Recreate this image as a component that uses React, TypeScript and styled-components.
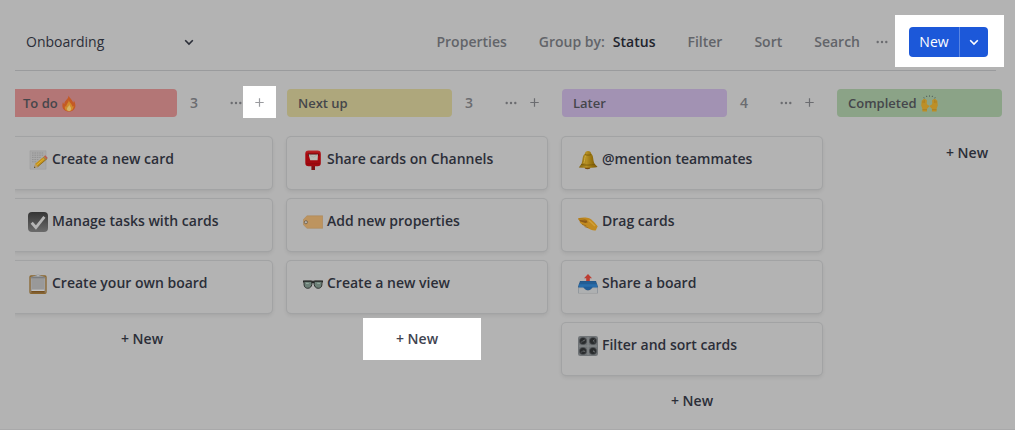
import React from 'react';
import styled, { createGlobalStyle } from 'styled-components';

const GlobalStyle = createGlobalStyle`
  * { box-sizing: border-box; }
  body {
    margin: 0;
    background: #b3b3b3;
    color: #2b2e38;
    font-family: 'Open Sans', 'Noto Sans', sans-serif;
    font-size: 14px;
    line-height: 20px;
  }
  button, input { font: inherit; color: inherit; }
  button { border: 0; padding: 0; background: none; cursor: pointer; white-space: nowrap; }
`;

const Page = styled.div`
  overflow: hidden;
  padding: 15px 0 12px 15px;
  border-bottom: 1px solid #a9a9aa;
`;

const Toolbar = styled.header`
  display: flex;
  align-items: center;
  min-height: 54px;
  padding-right: 11px;
`;

const ViewPicker = styled.div`
  display: flex;
  align-items: center;
  flex: 1;
  padding-left: 11px;
`;

const ViewName = styled.input`
  width: 156px;
  padding: 0;
  border: 0;
  outline: 0;
  background: none;
`;

const IconButton = styled.button<{ $width: number }>`
  display: flex;
  align-items: center;
  justify-content: center;
  flex: none;
  width: ${(p) => p.$width}px;
  height: 32px;
  color: #6b6c70;
`;

const PickerButton = styled(IconButton)`
  color: #2b2e38;
`;

const Actions = styled.nav`
  display: flex;
  align-items: center;
  gap: 32px;
  margin-right: 10px;
`;

const Action = styled.button`
  color: #626469;
  font-weight: 600;
`;

const GroupValue = styled.span`
  margin-left: 8px;
  color: #22242d;
`;

const PrimarySpotlight = styled.div`
  align-self: flex-start;
  margin-left: 1px;
  padding: 12px 16px 10px 14px;
  background: #fff;
`;

const SplitButton = styled.div`
  display: flex;
  height: 30px;
  overflow: hidden;
  border-radius: 4px;
  background: #1c58d9;
  color: #fff;
`;

const PrimaryButton = styled.button`
  width: 50px;
`;

const PrimaryMenuButton = styled.button`
  display: flex;
  align-items: center;
  justify-content: center;
  width: 29px;
  border-left: 1px solid #5a86e3;
`;

const Rule = styled.hr`
  height: 1px;
  margin: 1px 19px 15px 0;
  border: 0;
  background: #9a9b9d;
`;

const Board = styled.main`
  overflow: hidden;
`;

const Track = styled.div`
  display: flex;
  gap: 15px;
  margin-left: -3px;
`;

const Column = styled.section`
  flex: none;
  width: 260px;
`;

const ColumnHeader = styled.div`
  display: flex;
  align-items: center;
  height: 34px;
  margin-bottom: 17px;
`;

const Tag = styled.h2<{ $color: string }>`
  display: flex;
  align-items: center;
  gap: 4px;
  width: 165px;
  height: 28px;
  margin: 0 13px 0 0;
  padding: 0 11px;
  border-radius: 4px;
  background: ${(p) => p.$color};
  color: #45464b;
  font-size: 13px;
  font-weight: 600;
`;

const Count = styled.span`
  flex: 1;
  color: #6b6c70;
  font-weight: 600;
`;

const AddButton = styled(IconButton)<{ $lit: boolean }>`
  align-self: flex-start;
  margin-right: -4px;
  background: ${(p) => (p.$lit ? '#fff' : 'none')};
  color: ${(p) => (p.$lit ? '#999a9e' : '#6b6c70')};
`;

const Card = styled.article`
  display: flex;
  gap: 4px;
  height: 52px;
  margin-bottom: 10px;
  padding: 12px 16px;
  border-radius: 4px;
  box-shadow: 0 0 0 1px #a2a3a4, 0 2px 4px rgba(0, 0, 0, 0.1);
`;

const CardTitle = styled.h3`
  margin: 0;
  font-size: 14px;
  font-weight: 600;
`;

const NewRow = styled.div`
  display: flex;
  justify-content: center;
`;

const NewButton = styled.button<{ $lit: boolean }>`
  height: ${(p) => (p.$lit ? 42 : 32)}px;
  margin: ${(p) => (p.$lit ? '-5px 0' : '0')};
  margin-left: 10px;
  padding: 0 43px 0 33px;
  background: ${(p) => (p.$lit ? '#fff' : 'none')};
  color: ${(p) => (p.$lit ? '#3f4350' : '#2b2e38')};
  font-weight: 600;
`;

const Emoji = styled.svg`
  flex: none;
  margin-top: 1px;
`;

const TagEmoji = styled.svg`
  flex: none;
`;

const Chevron = () => (
  <svg width="12" height="12" viewBox="0 0 12 12" fill="none" stroke="currentColor" strokeWidth="1.6" aria-hidden>
    <path d="M2.2 4.2 6 8l3.8-3.8" />
  </svg>
);

const Dots = () => (
  <svg width="12" height="4" viewBox="0 0 12 4" fill="currentColor" aria-hidden>
    <circle cx="1.7" cy="2" r="1.2" />
    <circle cx="6" cy="2" r="1.2" />
    <circle cx="10.3" cy="2" r="1.2" />
  </svg>
);

const Plus = () => (
  <svg width="9" height="9" viewBox="0 0 9 9" stroke="currentColor" strokeWidth="1.2" aria-hidden>
    <path d="M4.5 .3v8.4M.3 4.5h8.4" />
  </svg>
);

const art: Record<string, React.ReactNode> = {
  memo: (
    <>
      <path d="M2 .8h16v18.4H2z" fill="#a9a9a9" stroke="#9a9a9a" strokeWidth=".5" />
      <path d="M4 3h12M4 5.2h12M4 7.4h9M4 9.6h7M4 11.8h5" stroke="#8f8f8f" strokeWidth=".9" strokeDasharray="1.6 .8" />
      <path d="m6 18 1.2-4.2L16.8 5.7l2.5 2.7-9.5 8.3z" fill="#c3921c" />
      <path d="m8.1 15.5 9.8-8.5" stroke="#e0b437" strokeWidth="1" />
      <path d="m9.4 17 9.6-8.3" stroke="#7e5c14" strokeWidth=".7" />
      <path d="m15.3 7 2.5 2.7" stroke="#777" strokeWidth="1" />
      <path d="m16 6.4 1.3-1.1 2.5 2.7-1.3 1.1z" fill="#b75c59" />
      <path d="m6 18 1.2-4.2 2.6 2.9z" fill="#b79a6d" />
      <path d="m6 18 .4-1.5.9 1z" fill="#333" />
    </>
  ),
  check: (
    <>
      <rect width="20" height="20" rx="4" fill="url(#checkBox)" />
      <path d="m3.7 10.8 4.2 4.7 8.5-10.7" fill="none" stroke="#b5b5b5" strokeWidth="2.8" />
    </>
  ),
  clipboard: (
    <>
      <rect x="2" y="2" width="16" height="17.3" rx="1" fill="#a5a5a5" stroke="#89652e" strokeWidth="1.3" />
      <path d="M3.2 17h13.6v1.8H3.2z" fill="#76501e" />
      <path d="M3.6 4.5h12.8v12H3.6z" fill="#999" />
      <path d="M4 16.3h12" stroke="#c0c0c0" strokeWidth="1.4" />
      <path d="M4.6 2.3C8 2.3 7.6 .4 10 .4s2 1.9 5.4 1.9V4H4.6z" fill="#96989a" />
      <path d="M3 3.8h14" stroke="#66686b" strokeWidth=".8" />
      <circle cx="10" cy="1.6" r=".8" fill="#bbb" />
    </>
  ),
  postbox: (
    <>
      <path d="M8.4 15h3.6v5H8.4z" fill="#7c1012" />
      <rect x="2.3" y=".5" width="15.5" height="15.7" rx="3.2" fill="url(#postRed)" />
      <path d="M5 3.7h10.5v2.2H5z" fill="#4e0508" />
      <path d="m5.6 4.5 9.4-.1-.4 5.8-7.4.1z" fill="#b9bab4" />
      <path d="m5.9 4.8 4.7 2.4 4-2.6" fill="none" stroke="#a0a19d" strokeWidth=".6" />
      <path d="M3 13.8h14" stroke="#8f090d" strokeWidth="1" />
    </>
  ),
  tag: (
    <>
      <path d="M4 3.8h15.7v12.5H4L.4 12.8V7.4z" fill="#bd945f" stroke="#a88253" strokeWidth=".5" />
      <circle cx="2.9" cy="10.2" r="1.6" fill="#b3b3b3" stroke="#705c43" strokeWidth=".8" />
    </>
  ),
  glasses: (
    <>
      <path d="M1.3 7.3h7c1.2 0 1.2 7-3.5 7-3.8 0-4.2-3.8-3.5-7zm10.4 0h7c.7 3.2.3 7-3.5 7-4.7 0-4.7-7-3.5-7z" fill="#6d8078" stroke="#242625" strokeWidth=".9" />
      <path d="M0 7h8q2 .8 4 0h8M.4 7v1.6M19.6 7v1.6M8.6 8.8q1.4-.8 2.8 0" fill="none" stroke="#242625" strokeWidth="1.1" />
      <path d="m3 9.4 2.8.1m8.4-.1 2.8.1" stroke="#92a69c" strokeWidth="1.2" />
    </>
  ),
  bell: (
    <>
      <ellipse cx="9.5" cy="17.3" rx="3" ry="1.9" fill="#794a0b" />
      <path d="M10 .9c2 0 3 1.1 3.3 2.8 2.6 2 1.4 7.2 3.5 10.2L19.6 17c-5.5 1-13 1-18.8.6L3.4 14c1.6-3.2.6-8.3 3.4-10.3C7 2 8.2.9 10 .9z" fill="url(#bellGold)" />
      <path d="M7.1 4.6c2 .7 4 .7 6 0M3 14.5c4 .9 10 .7 14-.1" fill="none" stroke="#735507" strokeWidth=".8" />
      <path d="M7.5 5.7c-1 2-.6 5-1.7 7.5" fill="none" stroke="#d0ae40" strokeWidth="1" />
    </>
  ),
  pinch: (
    <>
      <path d="M.2 6.2c2.8-.7 5.8-.9 8.8-.5 3.3.5 5.3 2.3 7 4.4l3.7 4.2-2 4.1c-3 .4-5.4-.8-7.9-2.4L3.4 12c-1.2-.9-2.2-1.8-1.4-2.4L.5 7.4z" fill="#c18a20" />
      <path d="M.3 7c3.2-.3 6.2-.1 8.7 1.6" fill="none" stroke="#a26e17" strokeWidth=".8" />
      <path d="m1.6 8 6.8.6 1.4 1.6-2.5.9-5.6-1.8z" fill="#8b5916" />
      <path d="m4 12.4 4.3 1.4m-1.8.8 3.9 1.2" fill="none" stroke="#95651b" strokeWidth=".7" />
      <path d="M10.6 8.4c2.3 1.3 4.1 3.5 6.5 5.6" stroke="#d1a13a" strokeWidth="1.4" fill="none" />
    </>
  ),
  outbox: (
    <>
      <path d="M2 7h16l1.7 5.2v6.9H.3v-6.9z" fill="#244f7a" />
      <path d="M2.4 7.2h15.2l1.1 4H1.3z" fill="#225d95" />
      <path d="M.8 10.2h18.4v4H.8z" fill="#286dab" />
      <path d="M.3 13.8h5.1l2.2 1.8c1.4 1.1 3.4 1.1 4.8 0l2.2-1.8h5.1v5.6H.3z" fill="#aeb0b1" stroke="#959799" strokeWidth=".5" />
      <path d="M5 12.8h10l-2.5 2.4c-1.4 1.2-3.6 1.2-5 0z" fill="#205d98" />
      <path d="m10 0 4 4.2h-2.2V7H8.2V4.2H6z" fill="#bd3d32" />
    </>
  ),
  knobs: (
    <>
      <rect width="20" height="20" rx="2.3" fill="#707477" />
      <path d="M1 10h18M10 1v18" stroke="#85898b" strokeWidth="1" />
      {[[5, 5], [15, 5], [5, 15], [15, 15]].map(([x, y], i) => (
        <g key={i}>
          <circle cx={x} cy={y} r="3.6" fill="#292b2d" stroke="#54585b" strokeWidth=".6" />
          <path d={`M${x} ${y}l${i % 2 ? 2.2 : -2.2} 1.5`} stroke="#45494b" strokeWidth="1.3" />
          <path d={`M${x} ${y}l${i % 2 ? 1.6 : 2.2} ${i < 2 ? -1.2 : 0.4}`} stroke="#85888a" strokeWidth=".7" />
        </g>
      ))}
    </>
  ),
};

const Fire = () => (
  <TagEmoji width="14" height="17" viewBox="0 0 14 17" aria-hidden>
    <path d="M6.5.5c.6 2.2 4.4 4.8 4.6 7.3.6-.5.8-1.4.7-2.3 3.4 5.3 1.1 10.8-4.7 11.1C1.3 16.5-.8 12.4 1 7c.3 1 .6 1.6 1.4 2.1C2 5.5 6.8 4.5 6.5.5z" fill="#c45a24" />
    <path d="M6.8 5c.2 2.4 3.5 4.1 3.5 6.8l1.2-1c.2 3.4-1.7 5.4-4.4 5.4-3.2 0-5-2.2-4.1-5.2l1.3 1.1C3.8 9.3 6.8 7.9 6.8 5z" fill="#d18b2c" />
    <path d="M7.2 9.2c.1 1.8 2.1 2.6 1.9 4.7-.2 1.4-1 2.2-2 2.2-1.8 0-2.7-1.5-1.8-3.3.8-1.2 1.8-1.7 1.9-3.6z" fill="#d4b568" />
  </TagEmoji>
);

const RaisedHands = () => (
  <TagEmoji width="17" height="17" viewBox="0 0 17 17" aria-hidden>
    <path d="M3.3 3.4 2.8 2.3M5.8 2l-.3-1.2M8.5 1.7V.4M11.2 2l.3-1.2m2.2 2.6.5-1.1" stroke="#52605b" strokeWidth="1" />
    <g id="hand">
      <path d="M1.4 16.5v-2.7L.2 10.4.7 5.6c.1-.7 1-.7 1.1 0l.3-1.3c.2-.8 1.2-.7 1.2.1l.4-.3c.6-.4 1.2 0 1.2.6l.6.2c.4.2.5.6.4 1.1L5.7 8.6l1 1.4 1.4.5c.5.5.3 1.2-.3 1.4l-1.9 2.2.2 2.4z" fill="#bd8f27" />
      <path d="m2 5.6-.1 2.6m1.5-3.4-.1 3.2M1.4 14.7h4.7" stroke="#986c1c" strokeWidth=".4" />
    </g>
    <use href="#hand" transform="matrix(-1 0 0 1 17 0)" />
  </TagEmoji>
);

const columns = [
  {
    title: 'To do', color: '#b37676', icon: <Fire />, count: 3, litAdd: true,
    cards: [['memo', 'Create a new card'], ['check', 'Manage tasks with cards'], ['clipboard', 'Create your own board']],
  },
  {
    title: 'Next up', color: '#aea77c', count: 3, litNew: true,
    cards: [['postbox', 'Share cards on Channels'], ['tag', 'Add new properties'], ['glasses', 'Create a new view']],
  },
  {
    title: 'Later', color: '#a292b3', count: 4,
    cards: [['bell', '@mention teammates'], ['pinch', 'Drag cards'], ['outbox', 'Share a board'], ['knobs', 'Filter and sort cards']],
  },
  { title: 'Completed', color: '#8ba387', icon: <RaisedHands />, count: 0, cards: [] },
];

export default function App() {
  return (
    <Page>
      <GlobalStyle />
      <svg width="0" height="0" style={{ display: 'block' }} aria-hidden>
        <defs>
          <linearGradient id="checkBox" x2="0" y2="1"><stop stopColor="#343434" /><stop offset="1" stopColor="#6b6b6b" /></linearGradient>
          <linearGradient id="postRed" x2="0" y2="1"><stop stopColor="#b92a2b" /><stop offset=".25" stopColor="#a7070d" /><stop offset="1" stopColor="#a20910" /></linearGradient>
          <linearGradient id="bellGold"><stop stopColor="#80600b" /><stop offset=".4" stopColor="#b79125" /><stop offset=".7" stopColor="#94700c" /><stop offset="1" stopColor="#76530b" /></linearGradient>
        </defs>
      </svg>
      <Toolbar>
        <ViewPicker>
          <ViewName aria-label="View name" defaultValue="Onboarding" />
          <PickerButton $width={14} aria-label="Choose view"><Chevron /></PickerButton>
        </ViewPicker>
        <Actions>
          <Action>Properties</Action>
          <Action>Group by:<GroupValue>Status</GroupValue></Action>
          <Action>Filter</Action>
          <Action>Sort</Action>
          <Action>Search</Action>
        </Actions>
        <IconButton $width={24} aria-label="View options"><Dots /></IconButton>
        <PrimarySpotlight>
          <SplitButton>
            <PrimaryButton>New</PrimaryButton>
            <PrimaryMenuButton aria-label="New from template"><Chevron /></PrimaryMenuButton>
          </SplitButton>
        </PrimarySpotlight>
      </Toolbar>
      <Rule />
      <Board>
        <Track>
          {columns.map((column) => (
            <Column key={column.title}>
              <ColumnHeader>
                <Tag $color={column.color}>{column.title}{column.icon}</Tag>
                {column.count > 0 && (
                  <>
                    <Count>{column.count}</Count>
                    <IconButton $width={14} aria-label="Column options"><Dots /></IconButton>
                    <AddButton $width={33} $lit={!!column.litAdd} aria-label="Add card"><Plus /></AddButton>
                  </>
                )}
              </ColumnHeader>
              {column.cards.map(([icon, title]) => (
                <Card key={title}>
                  <Emoji width="20" height="20" viewBox="0 0 20 20" aria-hidden>{art[icon]}</Emoji>
                  <CardTitle>{title}</CardTitle>
                </Card>
              ))}
              <NewRow>
                <NewButton $lit={!!column.litNew}>+ New</NewButton>
              </NewRow>
            </Column>
          ))}
        </Track>
      </Board>
    </Page>
  );
}
